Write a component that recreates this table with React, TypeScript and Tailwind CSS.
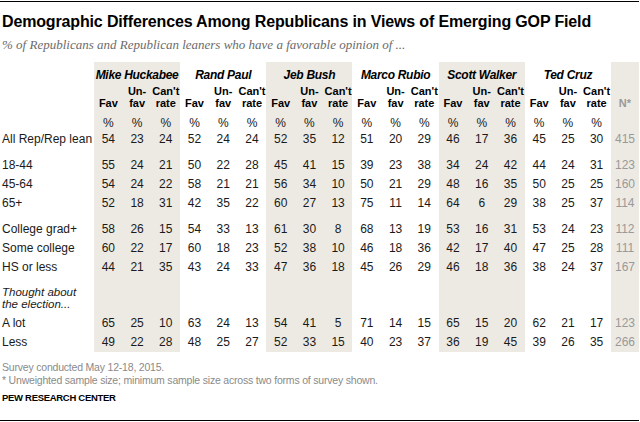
import React from 'react'

const candidates = ['Mike Huckabee', 'Rand Paul', 'Jeb Bush', 'Marco Rubio', 'Scott Walker', 'Ted Cruz']

type Row = { label: string; vals: number[]; n: number }

const ageRows: Row[] = [
  { label: '18-44', vals: [55, 24, 21, 50, 22, 28, 45, 41, 15, 39, 23, 38, 34, 24, 42, 44, 24, 31], n: 123 },
  { label: '45-64', vals: [54, 24, 22, 58, 21, 21, 56, 34, 10, 50, 21, 29, 48, 16, 35, 50, 25, 25], n: 160 },
  { label: '65+', vals: [52, 18, 31, 42, 35, 22, 60, 27, 13, 75, 11, 14, 64, 6, 29, 38, 25, 37], n: 114 },
]

const eduRows: Row[] = [
  { label: 'College grad+', vals: [58, 26, 15, 54, 33, 13, 61, 30, 8, 68, 13, 19, 53, 16, 31, 53, 24, 23], n: 112 },
  { label: 'Some college', vals: [60, 22, 17, 60, 18, 23, 52, 38, 10, 46, 18, 36, 42, 17, 40, 47, 25, 28], n: 111 },
  { label: 'HS or less', vals: [44, 21, 35, 43, 24, 33, 47, 36, 18, 45, 26, 29, 46, 18, 36, 38, 24, 37], n: 167 },
]

const thoughtRows: Row[] = [
  { label: 'A lot', vals: [65, 25, 10, 63, 24, 13, 54, 41, 5, 71, 14, 15, 65, 15, 20, 62, 21, 17], n: 123 },
  { label: 'Less', vals: [49, 22, 28, 48, 25, 27, 52, 33, 15, 40, 23, 37, 36, 19, 45, 39, 26, 35], n: 266 },
]

const allRow: Row = {
  label: 'All Rep/Rep lean',
  vals: [54, 23, 24, 52, 24, 24, 52, 35, 12, 51, 20, 29, 46, 17, 36, 45, 25, 30],
  n: 415,
}

const grid = 'grid grid-cols-[94px_repeat(18,minmax(0,1fr))_28px]'
const shaded = (i: number) => Math.floor(i / 3) % 2 === 0

function Cells({ render, h }: { render?: (i: number) => React.ReactNode; h: string }) {
  return (
    <>
      {Array.from({ length: 18 }).map((_, i) => (
        <div key={i} className={`${h} text-center ${shaded(i) ? 'bg-[#edeae4]' : ''}`}>
          {render ? render(i) : null}
        </div>
      ))}
    </>
  )
}

function Spacer({ h }: { h: string }) {
  return (
    <div className={grid}>
      <div className={h} />
      <Cells h={h} />
      <div className={`${h} bg-[#edeae4]`} />
    </div>
  )
}

function DataRow({ row }: { row: Row }) {
  return (
    <div className={`${grid} text-[12px] leading-[19px] text-[#1a1a1a]`}>
      <div className="h-[19px] pl-[2px] whitespace-nowrap">{row.label}</div>
      <Cells h="h-[19px]" render={(i) => row.vals[i]} />
      <div className="h-[19px] bg-[#edeae4] text-center text-[#999]">{row.n}</div>
    </div>
  )
}

export default function App() {
  return (
    <div
      className="w-[640px] h-[422px] bg-white pt-[1px]"
      style={{ fontFamily: '"Liberation Sans", Arial, sans-serif' }}
    >
      <div className="w-[639px] h-[420px] border-t border-b border-solid border-black flex flex-col">
        <h1 className="pt-[11px] pl-[2px] text-[16px] leading-[18px] font-bold tracking-[-0.15px] text-black whitespace-nowrap">
          Demographic Differences Among Republicans in Views of Emerging GOP Field
        </h1>
        <p
          className="mt-[6px] pl-[2px] text-[13px] leading-[16px] italic text-[#6b6b6b] whitespace-nowrap"
          style={{ fontFamily: '"Liberation Serif", Georgia, serif' }}
        >
          % of Republicans and Republican leaners who have a favorable opinion of ...
        </p>

        <div className="mt-[9px]">
          {/* candidate names */}
          <div className={`${grid} text-[12px] font-bold italic text-black`}>
            <div className="h-[23px]" />
            {candidates.map((c, i) => (
              <div
                key={c}
                className={`col-span-3 h-[23px] pt-[3px] leading-[20px] text-center tracking-[-0.3px] whitespace-nowrap ${
                  i % 2 === 0 ? 'bg-[#edeae4]' : ''
                }`}
              >
                {c}
              </div>
            ))}
            <div className="h-[23px] bg-[#edeae4]" />
          </div>

          {/* Fav / Unfav / Can't rate */}
          <div className={`${grid} text-[11px] font-bold leading-[12px] text-black`}>
            <div className="h-[24px]" />
            <Cells
              h="h-[24px] flex flex-col justify-end whitespace-nowrap"
              render={(i) =>
                i % 3 === 0 ? (
                  <span>Fav</span>
                ) : i % 3 === 1 ? (
                  <>
                    <span>Un-</span>
                    <span>fav</span>
                  </>
                ) : (
                  <>
                    <span>Can't</span>
                    <span>rate</span>
                  </>
                )
              }
            />
            <div className="h-[24px] bg-[#edeae4] flex items-end justify-center text-[#999]">N*</div>
          </div>

          {/* percent signs */}
          <div className={`${grid} text-[12px] leading-[16px] text-[#1a1a1a]`}>
            <div className="h-[21px]" />
            <Cells h="h-[21px] pt-[6px]" render={() => '%'} />
            <div className="h-[21px] bg-[#edeae4]" />
          </div>

          <DataRow row={allRow} />
          <Spacer h="h-[7px]" />
          {ageRows.map((r) => (
            <DataRow key={r.label} row={r} />
          ))}
          <Spacer h="h-[7px]" />
          {eduRows.map((r) => (
            <DataRow key={r.label} row={r} />
          ))}

          <div className={`${grid} text-[11.5px] leading-[12px] italic text-[#1a1a1a]`}>
            <div className="h-[37px] pt-[9px] pl-[2px] whitespace-nowrap">
              Thought about
              <br />
              the election...
            </div>
            <Cells h="h-[37px]" />
            <div className="h-[37px] bg-[#edeae4]" />
          </div>

          {thoughtRows.map((r) => (
            <DataRow key={r.label} row={r} />
          ))}
        </div>

        <div className="mt-[9px] pl-[2px] text-[10.5px] leading-[13px] tracking-[-0.2px] text-[#8a8a8a] whitespace-nowrap">
          <p>Survey conducted May 12-18, 2015.</p>
          <p>* Unweighted sample size; minimum sample size across two forms of survey shown.</p>
        </div>
        <p className="mt-[5px] pl-[2px] text-[9.5px] leading-[12px] font-bold tracking-[-0.3px] text-black">
          PEW RESEARCH CENTER
        </p>
      </div>
    </div>
  )
}
